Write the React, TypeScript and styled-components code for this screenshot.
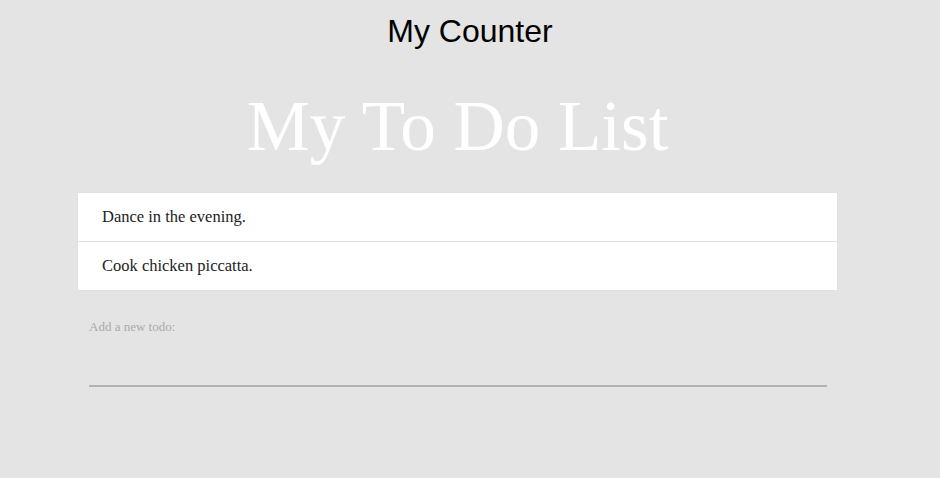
import styled, { createGlobalStyle } from 'styled-components';

const GlobalStyle = createGlobalStyle`
  html, body {
    margin: 0;
    padding: 0;
    background: #e4e4e4;
  }
  body {
    width: 940px;
    height: 478px;
    overflow: hidden;
  }
`;

const Page = styled.div`
  display: flex;
  flex-direction: column;
`;

const CounterTitle = styled.h1`
  margin: 0;
  padding-top: 10px;
  height: 50px;
  text-align: center;
  font-family: "Liberation Sans", Arial, sans-serif;
  font-weight: normal;
  font-size: 32px;
  line-height: 42px;
  color: #000;
`;

const Container = styled.div`
  width: 759px;
  margin-left: 78px;
  display: flex;
  flex-direction: column;
`;

const Title = styled.h2`
  margin: 0;
  height: 133px;
  text-align: center;
  font-family: "Liberation Serif", "Times New Roman", serif;
  font-weight: normal;
  font-size: 71px;
  line-height: 132px;
  color: #fff;
`;

const List = styled.ul`
  margin: 0;
  padding: 0;
  list-style: none;
  background: #fff;
  box-shadow: 0 0 1px rgba(0, 0, 0, 0.08);
`;

const Item = styled.li<{ $last?: boolean }>`
  height: 48px;
  padding: 0 24px;
  display: flex;
  align-items: center;
  border-bottom: ${(p) => (p.$last ? 'none' : '1px solid #e2e2e2')};
  font-family: "Liberation Serif", "Times New Roman", serif;
  font-size: 16.5px;
  color: #222;
`;

const Form = styled.form`
  padding: 29px 10px 0 11px;
  display: flex;
  flex-direction: column;
`;

const Label = styled.label`
  font-family: "Liberation Serif", "Times New Roman", serif;
  font-size: 13px;
  color: #aaa;
  line-height: 16px;
`;

const Input = styled.input`
  height: 48px;
  border: none;
  border-bottom: 2px solid #b2b2b2;
  background: transparent;
  outline: none;
  font-family: "Liberation Serif", "Times New Roman", serif;
  font-size: 16px;
`;

const todos = ['Dance in the evening.', 'Cook chicken piccatta.'];

const App = () => {
  return (
    <Page>
      <GlobalStyle />
      <CounterTitle>My Counter</CounterTitle>
      <Container>
        <Title>My To Do List</Title>
        <List>
          {todos.map((t, i) => (
            <Item key={t} $last={i === todos.length - 1}>{t}</Item>
          ))}
        </List>
        <Form onSubmit={(e) => e.preventDefault()}>
          <Label htmlFor="todo">Add a new todo:</Label>
          <Input id="todo" />
        </Form>
      </Container>
    </Page>
  );
};

export default App;
